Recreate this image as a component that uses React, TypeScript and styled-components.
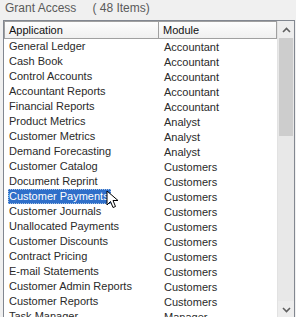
import styled, { createGlobalStyle } from "styled-components";

const GlobalStyle = createGlobalStyle`
  html, body {
    margin: 0;
    padding: 0;
    background: #f0f0f0;
    overflow: hidden;
  }
  body {
    font-family: "Liberation Sans", Arial, sans-serif;
    font-size: 11px;
  }
`;

const Page = styled.div`
  width: 296px;
  height: 317px;
  overflow: hidden;
  padding: 0 1px 0 3px;
  box-sizing: border-box;
`;

const TitleRow = styled.div`
  display: flex;
  gap: 16px;
  height: 20px;
  align-items: center;
  padding: 0 0 4px 2px;
  box-sizing: border-box;
  color: #5a5a5a;
  font-size: 12px;
`;

const ListBox = styled.div`
  display: grid;
  grid-template-columns: 1fr 17px;
  border: 1px solid #828790;
  border-bottom: none;
  background: #fff;
  height: 297px;
  overflow: hidden;
`;

const Content = styled.div`
  display: flex;
  flex-direction: column;
  overflow: hidden;
`;

const HeaderRow = styled.div`
  display: grid;
  grid-template-columns: 155px 118px;
  height: 18px;
  flex-shrink: 0;
`;

const HeaderCell = styled.div<{ first?: boolean }>`
  border: 1px solid #a0a0a0;
  border-left: ${(p) => (p.first ? "1px solid #a0a0a0" : "none")};
  background: linear-gradient(#fdfdfd, #f0f0f0);
  padding-left: 4px;
  display: flex;
  align-items: center;
  color: #111;
`;

const Row = styled.div`
  display: grid;
  grid-template-columns: 155px 118px;
  height: 15px;
  flex-shrink: 0;
  align-items: center;
  color: #2a2a2a;
`;

const AppCell = styled.div`
  padding-left: 4px;
  display: flex;
  align-items: center;
  height: 15px;
`;

const AppText = styled.span<{ selected?: boolean }>`
  padding: 0 2px 0 1px;
  height: 15px;
  line-height: 15px;
  box-sizing: border-box;
  background: ${(p) => (p.selected ? "#2f6fc9" : "transparent")};
  color: ${(p) => (p.selected ? "#fff" : "#2a2a2a")};
  outline: ${(p) => (p.selected ? "1px dotted #a7c2e6" : "none")};
  outline-offset: -1px;
  position: relative;
`;

const ModCell = styled.div`
  padding-left: 5px;
`;

const Scrollbar = styled.div`
  display: flex;
  flex-direction: column;
  background: #e8e8e8;
  border-left: 1px solid #e2e2e2;
`;

const ScrollButton = styled.div`
  height: 17px;
  flex-shrink: 0;
  display: flex;
  align-items: center;
  justify-content: center;
  background: #ededed;
`;

const Thumb = styled.div`
  height: 98px;
  background: #cdcdcd;
  margin: 0 1px;
`;

const Track = styled.div`
  flex: 1;
`;

const Cursor = styled.svg`
  position: absolute;
  left: 100%;
  top: 1px;
  margin-left: -5px;
`;

const rows: [string, string][] = [
  ["General Ledger", "Accountant"],
  ["Cash Book", "Accountant"],
  ["Control Accounts", "Accountant"],
  ["Accountant Reports", "Accountant"],
  ["Financial Reports", "Accountant"],
  ["Product Metrics", "Analyst"],
  ["Customer Metrics", "Analyst"],
  ["Demand Forecasting", "Analyst"],
  ["Customer Catalog", "Customers"],
  ["Document Reprint", "Customers"],
  ["Customer Payments", "Customers"],
  ["Customer Journals", "Customers"],
  ["Unallocated Payments", "Customers"],
  ["Customer Discounts", "Customers"],
  ["Contract Pricing", "Customers"],
  ["E-mail Statements", "Customers"],
  ["Customer Admin Reports", "Customers"],
  ["Customer Reports", "Customers"],
  ["Task Manager", "Manager"],
];

const Chevron = ({ up }: { up?: boolean }) => (
  <svg width="9" height="6" viewBox="0 0 9 6">
    <path
      d={up ? "M1 5 L4.5 1.5 L8 5" : "M1 1 L4.5 4.5 L8 1"}
      fill="none"
      stroke="#606060"
      strokeWidth="1.6"
    />
  </svg>
);

const App = () => {
  return (
    <Page>
      <GlobalStyle />
      <TitleRow>
        <span>Grant Access</span>
        <span>( 48 Items)</span>
      </TitleRow>
      <ListBox>
        <Content>
          <HeaderRow>
            <HeaderCell first>Application</HeaderCell>
            <HeaderCell>Module</HeaderCell>
          </HeaderRow>
          {rows.map(([app, mod], i) => {
            const selected = i === 10;
            return (
              <Row key={app}>
                <AppCell>
                  <AppText selected={selected}>
                    {app}
                    {selected && (
                      <Cursor width="14" height="20" viewBox="0 0 14 20">
                        <path
                          d="M1 1 L1 15 L4.5 11.5 L7 17.5 L9.5 16.5 L7 10.5 L12 10.5 Z"
                          fill="#fff"
                          stroke="#000"
                          strokeWidth="1"
                          strokeLinejoin="round"
                        />
                      </Cursor>
                    )}
                  </AppText>
                </AppCell>
                <ModCell>{mod}</ModCell>
              </Row>
            );
          })}
        </Content>
        <Scrollbar>
          <ScrollButton>
            <Chevron up />
          </ScrollButton>
          <Thumb />
          <Track />
          <ScrollButton>
            <Chevron />
          </ScrollButton>
        </Scrollbar>
      </ListBox>
    </Page>
  );
};

export default App;
